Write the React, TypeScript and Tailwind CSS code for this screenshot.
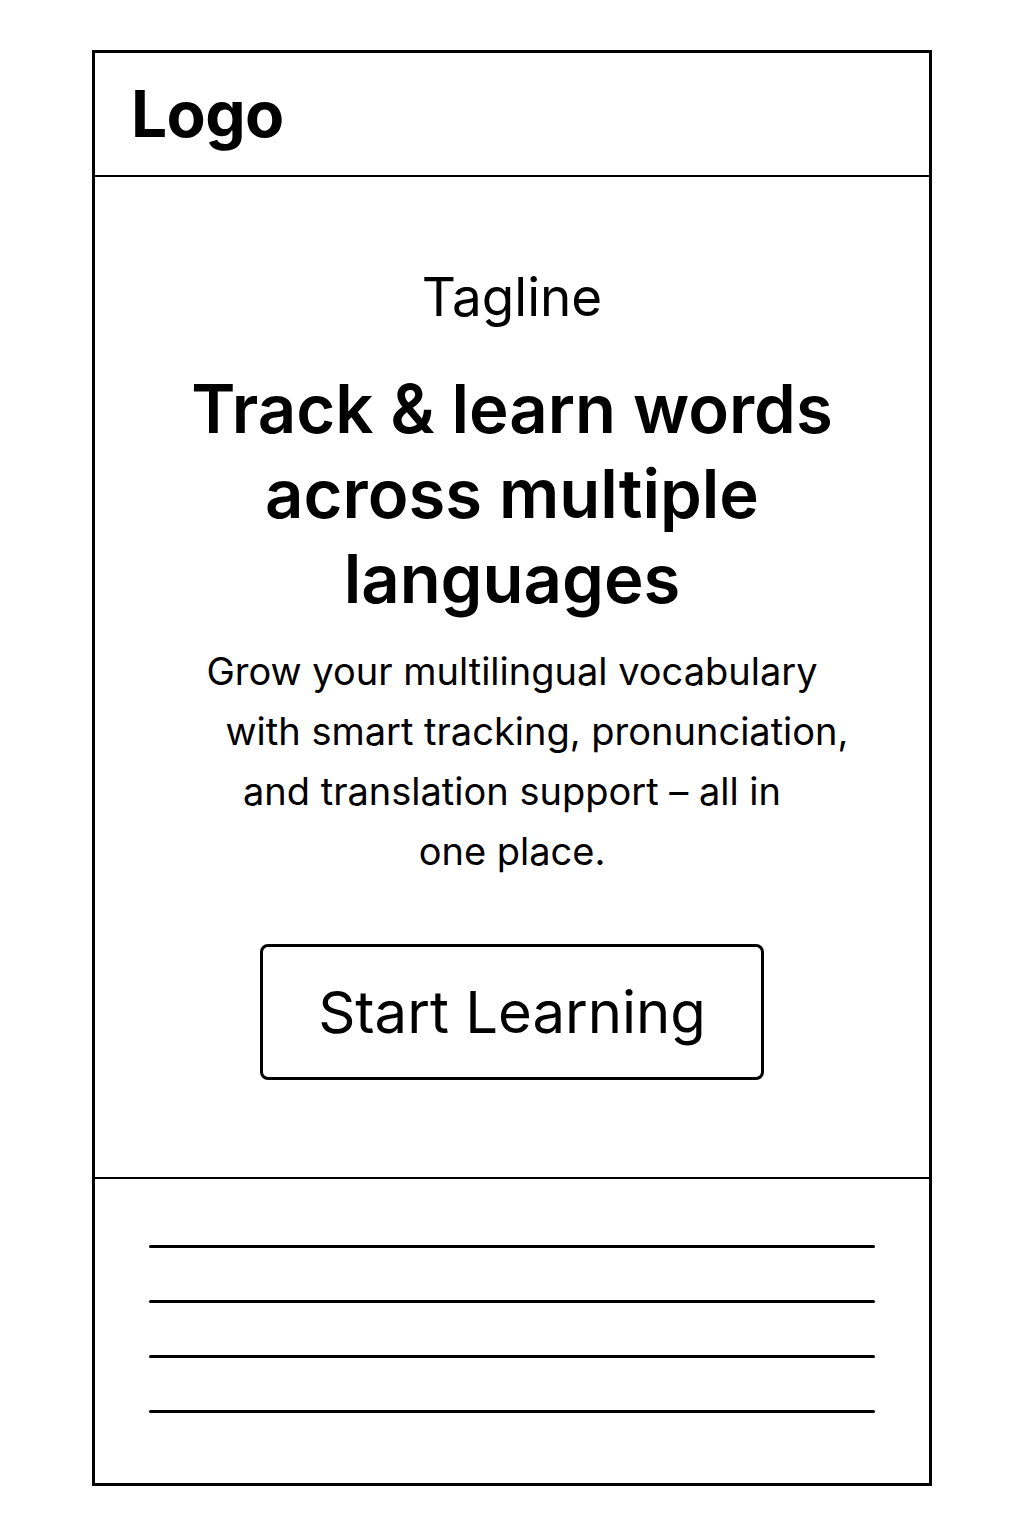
const footerLines = [0, 1, 2, 3];

export default function App() {
  return (
    <div className="min-h-[1536px] w-full bg-white pt-[50px] font-['Inter',sans-serif] text-black">
      <div className="ml-[92px] w-[840px] border-[3px] border-black">
        {/* header */}
        <header className="flex h-[124px] items-center border-b-2 border-black pl-[36px]">
          <span className="text-[64px] font-bold leading-none tracking-[-0.01em]">Logo</span>
        </header>

        {/* hero */}
        <section className="flex h-[1002px] flex-col items-center border-b-2 border-black pt-[94px]">
          <p className="text-[53px] leading-[52px]">Tagline</p>
          <h1 className="mt-[43px] text-center text-[67px] font-semibold leading-[85px]">
            Track &amp; learn words
            <br />
            across multiple
            <br />
            languages
          </h1>
          <p className="mt-[20px] text-center text-[38px] leading-[60px]">
            Grow your multilingual vocabulary
            <br />
            <span className="ml-[50px]">with smart tracking, pronunciation,</span>
            <br />
            and translation support – all in
            <br />
            one place.
          </p>
          <button className="mt-[63px] flex h-[136px] w-[504px] items-center justify-center rounded-lg border-[3px] border-black text-[58px] leading-none">
            Start Learning
          </button>
        </section>

        {/* footer placeholder lines */}
        <footer className="flex h-[304px] flex-col gap-[52px] px-[54px] pt-[66px]">
          {footerLines.map((i) => (
            <div key={i} className="h-[3px] w-full rounded-full bg-black" />
          ))}
        </footer>
      </div>
    </div>
  );
}
